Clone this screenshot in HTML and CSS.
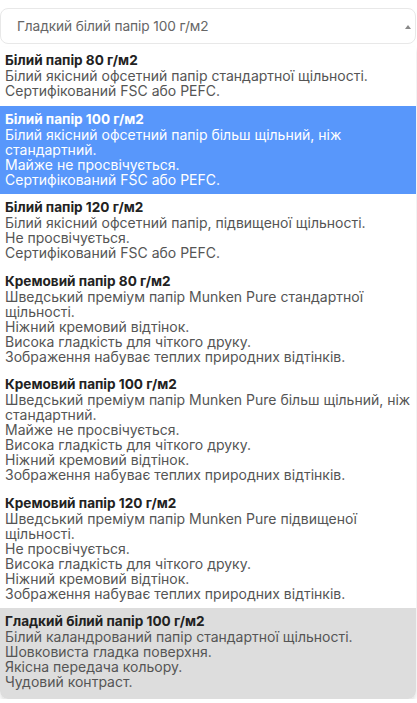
FILE: index.html
```html
<!DOCTYPE html>
<html lang="uk"><head><meta charset="utf-8"><link rel="stylesheet" href="styles.css"></head>
<body>
<div class="field">
  <div class="select">
    <span class="select-value">Гладкий білий папір 100 г/м2</span>
    <span class="caret"></span>
  </div>
  <ul class="dropdown">
    <li class="option">
      <div class="title">Білий папір 80 г/м2</div>
      <div>Білий якісний офсетний папір стандартної щільності.</div>
      <div>Сертифікований FSC або PEFC.</div>
    </li>
    <li class="option highlighted">
      <div class="title">Білий папір 100 г/м2</div>
      <div>Білий якісний офсетний папір більш щільний, ніж</div>
      <div>стандартний.</div>
      <div>Майже не просвічується.</div>
      <div>Сертифікований FSC або PEFC.</div>
    </li>
    <li class="option">
      <div class="title">Білий папір 120 г/м2</div>
      <div>Білий якісний офсетний папір, підвищеної щільності.</div>
      <div>Не просвічується.</div>
      <div>Сертифікований FSC або PEFC.</div>
    </li>
    <li class="option">
      <div class="title">Кремовий папір 80 г/м2</div>
      <div>Шведський преміум папір Munken Pure стандартної</div>
      <div>щільності.</div>
      <div>Ніжний кремовий відтінок.</div>
      <div>Висока гладкість для чіткого друку.</div>
      <div>Зображення набуває теплих природних відтінків.</div>
    </li>
    <li class="option">
      <div class="title">Кремовий папір 100 г/м2</div>
      <div>Шведський преміум папір Munken Pure більш щільний, ніж</div>
      <div>стандартний.</div>
      <div>Майже не просвічується.</div>
      <div>Висока гладкість для чіткого друку.</div>
      <div>Ніжний кремовий відтінок.</div>
      <div>Зображення набуває теплих природних відтінків.</div>
    </li>
    <li class="option">
      <div class="title">Кремовий папір 120 г/м2</div>
      <div>Шведський преміум папір Munken Pure підвищеної</div>
      <div>щільності.</div>
      <div>Не просвічується.</div>
      <div>Висока гладкість для чіткого друку.</div>
      <div>Ніжний кремовий відтінок.</div>
      <div>Зображення набуває теплих природних відтінків.</div>
    </li>
    <li class="option selected">
      <div class="title">Гладкий білий папір 100 г/м2</div>
      <div>Білий каландрований папір стандартної щільності.</div>
      <div>Шовковиста гладка поверхня.</div>
      <div>Якісна передача кольору.</div>
      <div>Чудовий контраст.</div>
    </li>
  </ul>
</div>
</body></html>
```

FILE: styles.css
```css
html, body {
  margin: 0;
  padding: 0;
  background: #fff;
}
body {
  font-family: "Inter", "Open Sans", sans-serif;
  font-size: 14px;
  color: #555;
}
.field {
  padding-top: 8px;
}
.select {
  box-sizing: border-box;
  height: 36px;
  margin-right: 1px;
  border: 1px solid #e8e8e8;
  border-radius: 8px;
  display: flex;
  align-items: center;
  padding: 0 4px 0 16px;
  background: #fff;
}
.select-value {
  flex: 1;
  color: #666;
  font-size: 13.7px;
  letter-spacing: -0.1px;
}
.caret {
  width: 0;
  height: 0;
  border-left: 3px solid transparent;
  border-right: 3px solid transparent;
  border-bottom: 4px solid #888;
  margin-top: 2px;
}
.dropdown {
  list-style: none;
  margin: 3px 1px 0 0;
  padding: 0;
  background: #fff;
  border-radius: 0 0 8px 8px;
  overflow: hidden;
  box-shadow: 0 3px 4px rgba(0, 0, 0, 0.12);
}
.option {
  padding: 6px 5px 7.5px;
  line-height: 15px;
  white-space: nowrap;
}
.option .title {
  font-weight: 700;
  color: #222;
  font-size: 13.6px;
}
.option.highlighted {
  background: #5897fb;
  color: #fff;
}
.option.highlighted .title {
  color: #fff;
}
.option.selected {
  background: #dddddd;
  padding-bottom: 10px;
}
```
